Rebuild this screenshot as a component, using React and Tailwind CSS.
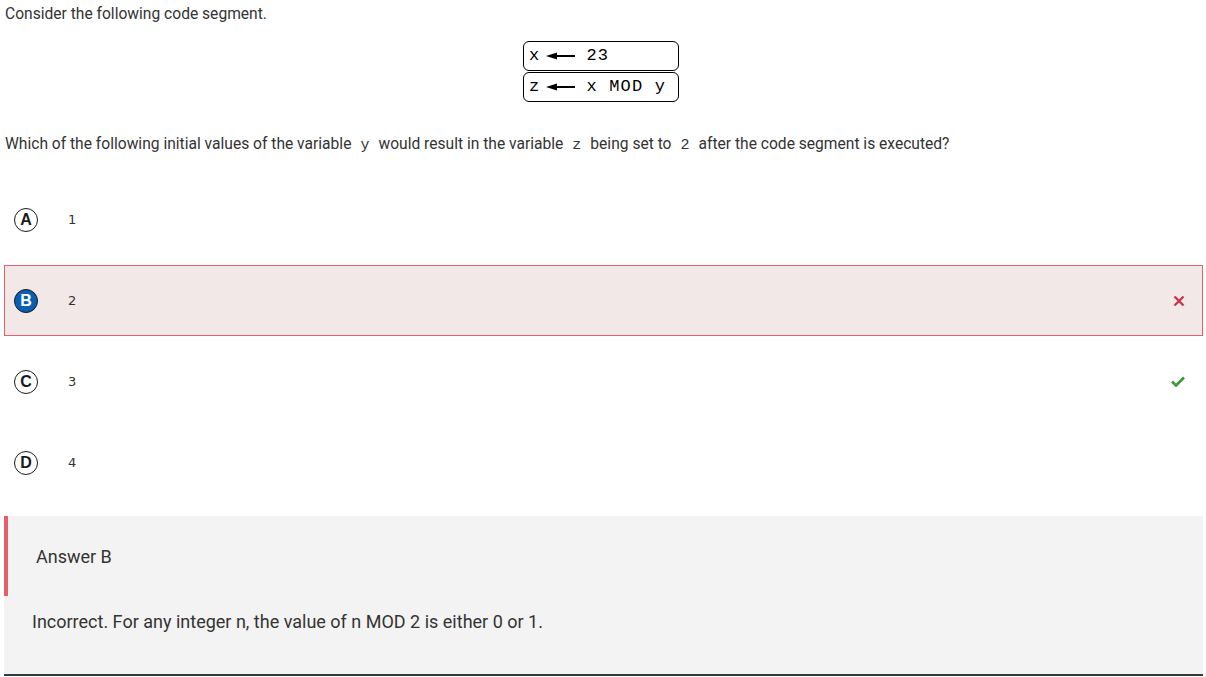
const Arrow = () => (
  <svg width="30" height="10" viewBox="0 0 30 10" className="ml-[6px] mr-[10px] shrink-0">
    <line x1="8" y1="5" x2="29" y2="5" stroke="#000" strokeWidth="2" />
    <polygon points="0,5 11,1.5 11,8.5" fill="#000" />
  </svg>
);

const CodeLine = ({ left, right }) => (
  <div className="flex h-[30px] w-[156px] items-center rounded-[6px] border border-black pl-[5px] text-[17px] tracking-[1.2px] text-black [font-family:'Liberation_Mono',monospace]">
    <span>{left}</span>
    <Arrow />
    <span className="whitespace-pre">{right}</span>
  </div>
);

const Mono = ({ children }) => (
  <span className="px-[9px] text-[15px] [font-family:'Liberation_Mono',monospace]">{children}</span>
);

const Letter = ({ l, selected }) => (
  <div
    className={
      selected
        ? 'flex h-[24px] w-[24px] items-center justify-center rounded-full border border-[#1a1a1a] bg-[#0b5fb3] text-[16px] font-bold text-white [font-family:"Liberation_Sans",sans-serif]'
        : 'flex h-[24px] w-[24px] items-center justify-center rounded-full border border-[#1a1a1a] bg-white text-[16px] font-bold text-[#1a1a1a] [font-family:"Liberation_Sans",sans-serif]'
    }
  >
    {l}
  </div>
);

const options = [
  { l: 'A', v: '1' },
  { l: 'B', v: '2', selected: true, wrong: true },
  { l: 'C', v: '3', correct: true },
  { l: 'D', v: '4' },
];

export default function App() {
  return (
    <div className="h-[677px] w-[1206px] overflow-hidden bg-white text-[#333] [font-family:Roboto,'Liberation_Sans',sans-serif]">
      <p className="pl-[5px] pt-[5px] text-[15.6px] leading-[18px]">Consider the following code segment.</p>
      <div className="mt-[18px] flex flex-col items-center gap-[1px] pr-[4px]">
        <CodeLine left="x" right="23" />
        <CodeLine left="z" right="x MOD y" />
      </div>
      <p className="mt-[33px] pl-[5px] text-[15.6px] leading-[18px]">
        Which of the following initial values of the variable<Mono>y</Mono>would result in the variable
        <Mono>z</Mono>being set to<Mono>2</Mono>after the code segment is executed?
      </p>
      <div className="mt-[29px] flex flex-col gap-[10px] pl-[4px] pr-[3px]">
        {options.map((o) => (
          <div
            key={o.l}
            className={
              o.selected
                ? 'flex h-[71px] items-center border border-[#e5606c] bg-[#f3e8e8] pl-[9px] pr-[17px]'
                : 'flex h-[71px] items-center border border-transparent pl-[9px] pr-[17px]'
            }
          >
            <Letter l={o.l} selected={o.selected} />
            <span className="ml-[30px] text-[13px] [font-family:'DejaVu_Sans',sans-serif] text-[#333]">{o.v}</span>
            <span className="ml-auto">
              {o.wrong && (
                <svg width="12" height="12" viewBox="0 0 12 12">
                  <path d="M1.5 1.5 L10.5 10.5 M10.5 1.5 L1.5 10.5" stroke="#c9364b" strokeWidth="2.4" />
                </svg>
              )}
              {o.correct && (
                <svg width="14" height="11" viewBox="0 0 14 11">
                  <path d="M1 5.5 L5 9.5 L13 1.5" stroke="#3a9a3a" strokeWidth="2.6" fill="none" />
                </svg>
              )}
            </span>
          </div>
        ))}
      </div>
      <div className="ml-[4px] mr-[3px] mt-[18px] h-[160px] border-b-2 border-[#2f3b3b] bg-[#f3f3f3]">
        <div className="flex h-[80px] items-center border-l-4 border-[#e85d6c] pl-[28px] text-[18px]">Answer B</div>
        <p className="pl-[28px] pt-[16px] text-[18px] leading-[20px]">Incorrect. For any integer n, the value of n MOD 2 is either 0 or 1.</p>
      </div>
    </div>
  );
}
